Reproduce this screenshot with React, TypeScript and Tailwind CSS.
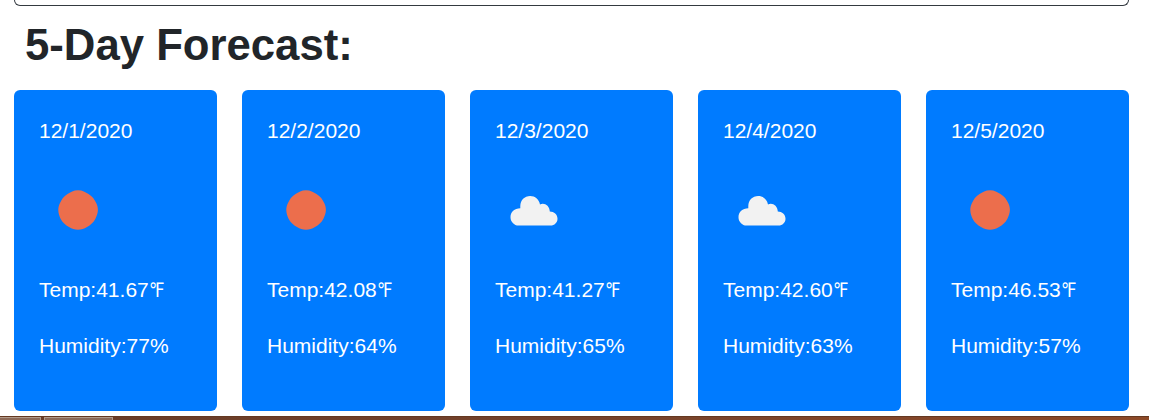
type Icon = "sun" | "cloud";

const days: { date: string; icon: Icon; temp: string; humidity: string }[] = [
  { date: "12/1/2020", icon: "sun", temp: "41.67", humidity: "77" },
  { date: "12/2/2020", icon: "sun", temp: "42.08", humidity: "64" },
  { date: "12/3/2020", icon: "cloud", temp: "41.27", humidity: "65" },
  { date: "12/4/2020", icon: "cloud", temp: "42.60", humidity: "63" },
  { date: "12/5/2020", icon: "sun", temp: "46.53", humidity: "57" },
];

function WeatherIcon({ icon }: { icon: Icon }) {
  return (
    <svg className="block h-20 w-20" viewBox="0 0 80 80">
      {icon === "sun" ? (
        <path
          fill="#ec6e4c"
          d="M39 20.200C43.500 20.200 46.500 22.300 49.500 24C53.500 26.300 55.500 29.500 57.200 33C58.400 35.500 58.900 37.500 58.900 40C58.900 43 57.700 46.200 56.300 49C54.500 52.500 51.500 55 48 57C45 58.700 42.500 59.800 39 59.800C35.500 59.800 33 58.700 30 57C26.500 55 23.500 52.500 21.700 49C20.300 46.200 19.300 43 19.300 40C19.300 37.500 19.800 35.500 21 33C22.700 29.500 24.500 26.300 28.500 24C31.500 22.300 34.500 20.200 39 20.200Z"
        />
      ) : (
        <path
          fill="#f2f2f2"
          d="M23.700 55.500C19 55.500 15.500 51.700 15.500 47.200C15.500 42 19.500 38.300 25.300 38.300V36C25.300 30.200 29.500 26 35.200 26C40 26 44 29.300 45 34.400C49.500 32.500 54.500 35.500 54.800 41.500C59 41.600 62.500 44.500 62.500 48.700C62.500 52.600 59.500 55.500 55.500 55.500Z"
        />
      )}
    </svg>
  );
}

export default function App() {
  return (
    <div className="flex h-[420px] flex-col overflow-hidden bg-white font-['Liberation_Sans',Arial,sans-serif] text-[#212529]">
      <div className="ml-[14px] mr-5 h-[6px] shrink-0 rounded-b-[7px] border border-t-0 border-[#343a40]" />
      <h1 className="ml-[25px] mt-[12px] h-[72px] shrink-0 text-[43.7px] font-bold leading-[54px]">5-Day Forecast:</h1>
      <div className="ml-[14px] mr-5 grid h-[321px] shrink-0 grid-cols-5 gap-[25px]">
        {days.map((d) => (
          <section key={d.date} className="flex flex-col rounded-[6px] bg-[#007bff] pl-[25px] pt-[25px] text-[21px] leading-8 text-white">
            <p>{d.date}</p>
            <div className="mt-[23px] h-[104px]">
              <WeatherIcon icon={d.icon} />
            </div>
            <p className="flex">
              <span>Temp:{d.temp}</span>
              <span className="h-8 origin-left scale-x-[0.82] font-['DejaVu_Sans','Noto_Sans_CJK_JP',sans-serif] text-[20px]">℉</span>
            </p>
            <p className="mt-6">Humidity:{d.humidity}%</p>
          </section>
        ))}
      </div>
      <div className="mt-[5px] flex h-1 shrink-0 gap-[3px] border-t border-[#633821] bg-linear-to-r from-[#673b27] via-[#75422b] to-[#8d4927]">
        <div className="h-1 w-[41px] border-r border-t border-[#b19a8a] bg-[#8c6957]" />
        <div className="h-1 w-[69px] border-x border-t border-[#b19a8a] bg-[#8c6957]" />
      </div>
    </div>
  );
}
